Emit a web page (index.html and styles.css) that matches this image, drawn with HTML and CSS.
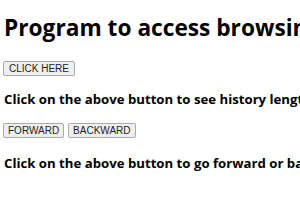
FILE: index.html
```html
<!DOCTYPE html>
<html lang="en">
<head>
  <meta charset="UTF-8">
  <title>History object</title>
  <link rel="stylesheet" href="styles.css">
</head>
<body>
  <h1>Program to access browsing history</h1>
  <button class="btn">CLICK HERE</button>
  <h3>Click on the above button to see history length</h3>
  <div class="row">
    <button class="btn">FORWARD</button>
    <button class="btn">BACKWARD</button>
  </div>
  <h3 class="last">Click on the above button to go forward or backward</h3>
</body>
</html>
```

FILE: styles.css
```css
body {
  margin: 0;
  padding: 0 4px;
  background: #fff;
  color: #000;
  font-family: 'Open Sans', sans-serif;
  white-space: nowrap;
  overflow: hidden;
}
h1 {
  font-size: 22.7px;
  font-weight: bold;
  line-height: 30px;
  margin: 13px 0 18px;
}
h3 {
  font-size: 13.2px;
  font-weight: bold;
  line-height: 18px;
  margin: 14px 0 15px;
}
h3.last {
  margin-top: 16px;
}
.row {
  display: flex;
  gap: 4px;
}
.btn {
  display: block;
  margin-left: -1px;
  font-family: 'Liberation Sans', Arial, sans-serif;
  font-size: 10px;
  color: #222;
  background: #efefef;
  border: 1px solid #aaa;
  border-radius: 2px;
  padding: 0 5px;
  height: 15px;
  line-height: 13px;
}
.row .btn {
  padding: 0 4px;
}
.row .btn + .btn {
  margin-left: 0;
}
```
